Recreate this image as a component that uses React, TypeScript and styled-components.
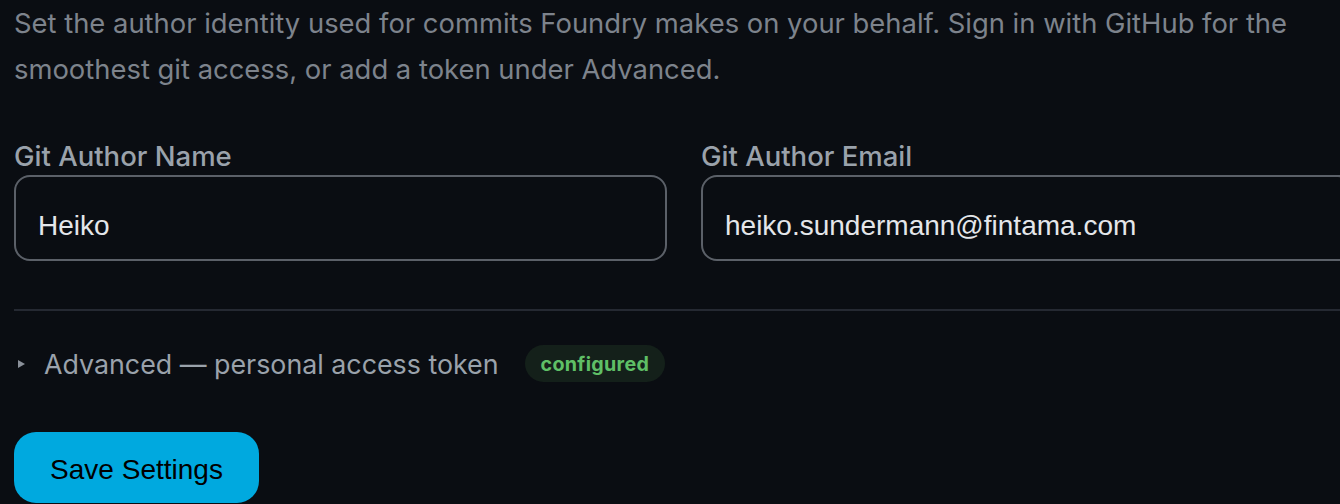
import React from 'react';
import styled, { createGlobalStyle } from 'styled-components';

const GlobalStyle = createGlobalStyle`
  html, body {
    margin: 0;
    padding: 0;
    background: #0a0d12;
    overflow: hidden;
  }
`;

const SPage = styled.div`
  width: 1340px;
  padding: 0 0 0 14px;
  font-family: Inter, "Noto Sans", sans-serif;
`;

const SDescription = styled.p`
  margin: 0;
  font-size: 27.4px;
  line-height: 46px;
  color: #7d838c;
`;

const SFields = styled.div`
  display: grid;
  grid-template-columns: 1fr 1fr;
  gap: 34px;
  margin-top: 48px;
`;

const SField = styled.label`
  display: flex;
  flex-direction: column;
  gap: 3px;
`;

const SLabel = styled.span`
  font-size: 27.5px;
  line-height: 32px;
  font-weight: 500;
  color: #9aa2ab;
`;

const SInput = styled.input`
  box-sizing: border-box;
  height: 86px;
  width: 100%;
  padding: 16px 22px 0;
  border: 2px solid #5b6068;
  border-radius: 16px;
  background: #0a0d12;
  color: #e4e6ea;
  font-family: "Liberation Sans", Arial, sans-serif;
  font-size: 28px;
  outline: none;
`;

const SDivider = styled.hr`
  margin: 48px 0 0;
  border: none;
  border-top: 2px solid #252932;
`;

const SAdvanced = styled.div`
  display: flex;
  align-items: center;
  height: 37px;
  margin-top: 34px;
`;

const STriangle = styled.span`
  width: 0;
  height: 0;
  margin: 0 19px 0 4px;
  border-top: 4.5px solid transparent;
  border-bottom: 4.5px solid transparent;
  border-left: 7px solid #8a9099;
`;

const SAdvancedText = styled.span`
  font-size: 26.8px;
  color: #9aa2ab;
`;

const SBadge = styled.span`
  display: inline-flex;
  align-items: center;
  height: 37px;
  padding: 0 16px;
  margin-left: 26px;
  border-radius: 19px;
  background: #14201a;
  color: #5fbf66;
  font-size: 19.7px;
  font-weight: 700;
  letter-spacing: 0.3px;
`;

const SSaveButton = styled.button`
  display: block;
  box-sizing: border-box;
  width: 245px;
  height: 71px;
  margin-top: 50px;
  padding: 4px 0 0;
  border: none;
  border-radius: 22px;
  background: #00a9df;
  color: #000;
  font-family: "Liberation Sans", Arial, sans-serif;
  font-size: 28px;
  cursor: pointer;
`;

export default function App() {
  return (
    <>
      <GlobalStyle />
      <SPage>
        <SDescription>
          Set the author identity used for commits Foundry makes on your behalf. Sign in with GitHub for the
          <br />
          smoothest git access, or add a token under Advanced.
        </SDescription>
        <SFields>
          <SField>
            <SLabel>Git Author Name</SLabel>
            <SInput defaultValue="Heiko" />
          </SField>
          <SField>
            <SLabel>Git Author Email</SLabel>
            <SInput defaultValue="heiko.sundermann@fintama.com" />
          </SField>
        </SFields>
        <SDivider />
        <SAdvanced>
          <STriangle />
          <SAdvancedText>Advanced — personal access token</SAdvancedText>
          <SBadge>configured</SBadge>
        </SAdvanced>
        <SSaveButton>Save Settings</SSaveButton>
      </SPage>
    </>
  );
}
